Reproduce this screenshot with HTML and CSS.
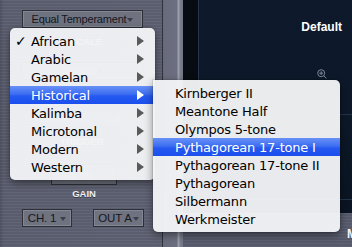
FILE: index.html
```html
<!DOCTYPE html>
<html lang="en">
<head>
    <meta charset="UTF-8">
    <title>Scale menu</title>
    <link rel="stylesheet" href="styles.css">
</head>
<body>
    <div class="screen">
        <div class="left">
            <div class="sel wide">Equal Temperament<span class="caret"></span></div>
            <div class="lbl scale">SCALE</div>
            <div class="sel wide dim">Normal<span class="caret"></span></div>
            <div class="latch"><span>LATCH</span><span class="latchVal">1</span></div>
            <div class="lbl trig">TRIGGER</div>
            <div class="num">-6 db<span class="step">&#9650;&#9660;</span></div>
            <div class="lbl gain">GAIN</div>
            <div class="outs">
                <div class="sel ch">CH. 1<span class="caret"></span></div>
                <div class="sel out">OUT A<span class="caret"></span></div>
            </div>
        </div>
        <div class="divider"></div>
        <div class="right">
            <div class="display">
                <div class="gutter"></div>
                <div class="plot">
                    <div class="band top">
                        <div class="preset">Default</div>
                        <svg class="zoomIcon" width="10" height="10" viewBox="0 0 10 10">
                            <circle cx="4.2" cy="4.2" r="3.5" fill="none" stroke="#7d8799" stroke-width="1"/>
                            <path d="M4.2 2.3v3.8M2.3 4.2h3.8M6.8 6.8l2.6 2.6" stroke="#7d8799" stroke-width="1" fill="none"/>
                        </svg>
                    </div>
                    <div class="band middle"></div>
                    <div class="band low"></div>
                </div>
            </div>
            <div class="bottom"><span class="bottomLbl">M</span></div>
        </div>

        <div class="menu main">
            <div class="row"><span class="mark">&#10003;</span><span class="txt">African</span><span class="arrow"></span></div>
            <div class="row"><span class="mark"></span><span class="txt">Arabic</span><span class="arrow"></span></div>
            <div class="row"><span class="mark"></span><span class="txt">Gamelan</span><span class="arrow"></span></div>
            <div class="row on"><span class="mark"></span><span class="txt">Historical</span><span class="arrow"></span></div>
            <div class="row"><span class="mark"></span><span class="txt">Kalimba</span><span class="arrow"></span></div>
            <div class="row"><span class="mark"></span><span class="txt">Microtonal</span><span class="arrow"></span></div>
            <div class="row"><span class="mark"></span><span class="txt">Modern</span><span class="arrow"></span></div>
            <div class="row"><span class="mark"></span><span class="txt">Western</span><span class="arrow"></span></div>
        </div>

        <div class="menu sub">
            <div class="row"><span class="txt">Kirnberger II</span></div>
            <div class="row"><span class="txt">Meantone Half</span></div>
            <div class="row"><span class="txt">Olympos 5-tone</span></div>
            <div class="row on"><span class="txt">Pythagorean 17-tone I</span></div>
            <div class="row"><span class="txt">Pythagorean 17-tone II</span></div>
            <div class="row"><span class="txt">Pythagorean</span></div>
            <div class="row"><span class="txt">Silbermann</span></div>
            <div class="row"><span class="txt">Werkmeister</span></div>
        </div>
    </div>
</body>
</html>
```

FILE: styles.css
```css
body {
    margin: 0;
    width: 352px;
    height: 247px;
    overflow: hidden;
    font-family: "Liberation Sans", Arial, sans-serif;
}
.screen {
    position: relative;
    display: flex;
    width: 352px;
    height: 247px;
}
.left {
    width: 162px;
    height: 247px;
    box-sizing: border-box;
    padding-top: 10px;
    display: flex;
    flex-direction: column;
    background:
        repeating-linear-gradient(to bottom, rgba(255,255,255,0.04) 0 1px, rgba(0,0,0,0.03) 1px 3px),
        linear-gradient(to right, #4e5160 0, #5c5f70 4px, #5e6172 100%);
}
.sel {
    position: relative;
    box-sizing: border-box;
    height: 18px;
    display: flex;
    align-items: center;
    justify-content: center;
    background: #6f737f;
    border: 1px solid #2e3038;
    box-shadow: inset 0 0 0 1px #838795;
    color: #14161f;
    font-size: 11px;
    letter-spacing: -0.2px;
}
.wide {
    margin-left: 22px;
    width: 121px;
}
.dim {
    margin-top: 15px;
    color: #a2a6b3;
}
.caret {
    width: 0;
    height: 0;
    margin-left: 1px;
    margin-top: 2px;
    border-top: 4px solid #3b3e4a;
    border-left: 3px solid transparent;
    border-right: 3px solid transparent;
}
.lbl {
    color: #eef0f4;
    font-weight: bold;
    font-size: 9.5px;
    line-height: 10px;
    height: 10px;
    text-align: center;
    width: 162px;
    text-shadow: 0 1px 0 rgba(0,0,0,0.4);
}
.scale {
    margin-top: 9px;
    padding-left: 10px;
    box-sizing: border-box;
}
.latch {
    margin: 33px 0 0 33px;
    width: 95px;
    height: 12px;
    display: flex;
    justify-content: space-between;
    align-items: center;
    color: #a8acb8;
    font-size: 9px;
    padding: 0 8px;
    box-sizing: border-box;
    background: #6a6e7a;
}
.trig {
    margin-top: 12px;
    padding-left: 2px;
    box-sizing: border-box;
}
.num {
    margin: 17px 0 0 51px;
    width: 66px;
    height: 21px;
    box-sizing: border-box;
    border: 1px solid #2e3038;
    background: #6c707c;
    color: #a8acb8;
    font-size: 11px;
    display: flex;
    align-items: center;
    justify-content: space-between;
    padding: 0 4px 0 15px;
}
.step {
    font-size: 5px;
    line-height: 5px;
    width: 6px;
    color: #8e92a0;
}
.gain {
    margin-top: 4px;
    padding-left: 6px;
    box-sizing: border-box;
}
.outs {
    margin: 10px 0 0 22px;
    display: flex;
    gap: 21px;
}
.ch {
    width: 50px;
    height: 18px;
    font-size: 11.5px;
}
.out {
    width: 51px;
    height: 18px;
    font-size: 11.5px;
}
.ch .caret, .out .caret {
    margin-left: 4px;
    border-top-color: #3b3e4a;
}
.out .caret {
    margin-left: 1px;
}
.divider {
    width: 21px;
    height: 247px;
    box-sizing: border-box;
    border-left: 1px solid #30323d;
    background: linear-gradient(to right, #686b7b 0, #6c6f7f 14px, #9a9dac 15px, #9a9dac 16px, #7b7e8c 17px, #6f7280 21px);
}
.right {
    flex: 1;
    display: flex;
    flex-direction: column;
}
.display {
    height: 213px;
    display: flex;
}
.gutter {
    width: 15px;
    background: #070b12;
    border-right: 1px solid #26354b;
}
.plot {
    flex: 1;
    display: flex;
    flex-direction: column;
    background: linear-gradient(to bottom, #0e1a2c, #0c1828 60%, #0a1422);
}
.band {
    box-sizing: border-box;
    border-bottom: 1px solid #24344a;
}
.top {
    height: 115px;
    display: flex;
    flex-direction: column;
    align-items: flex-end;
    padding: 21px 10px 0 0;
}
.preset {
    color: #ffffff;
    font-weight: bold;
    font-size: 12px;
    line-height: 12px;
}
.zoomIcon {
    display: block;
    margin: 36px 15px 0 0;
}
.middle {
    height: 85px;
}
.low {
    flex: 1;
    border-bottom: none;
}
.bottom {
    flex: 1;
    display: flex;
    justify-content: flex-end;
    align-items: flex-end;
    padding: 0 0 6px 0;
    background:
        repeating-linear-gradient(to bottom, rgba(255,255,255,0.04) 0 1px, rgba(0,0,0,0.03) 1px 3px),
        #585c6d;
}
.bottomLbl {
    color: #f2f3f6;
    font-weight: bold;
    font-size: 12px;
    margin-right: -5px;
}
.menu {
    position: absolute;
    box-sizing: border-box;
    padding: 4px 0;
    background: rgba(243, 244, 246, 0.96);
    box-shadow: 0 3px 9px rgba(0, 0, 0, 0.45), 0 0 0 1px rgba(0, 0, 0, 0.08);
    font-family: "DejaVu Sans", sans-serif;
    font-size: 13px;
    letter-spacing: -0.2px;
    color: #000;
}
.main {
    left: 10px;
    top: 28px;
    width: 145px;
    border-radius: 5px;
}
.sub {
    left: 153px;
    top: 80px;
    width: 187px;
    border-radius: 0 5px 5px 5px;
}
.row {
    height: 18px;
    display: flex;
    align-items: center;
    padding-right: 11px;
}
.sub .row {
    padding-left: 22px;
}
.mark {
    width: 21px;
    box-sizing: border-box;
    padding-left: 5px;
    font-size: 14px;
}
.txt {
    flex: 1;
    white-space: nowrap;
}
.arrow {
    width: 0;
    height: 0;
    border-left: 7px solid #5a5a5a;
    border-top: 5px solid transparent;
    border-bottom: 5px solid transparent;
}
.row.on {
    color: #fff;
    background: linear-gradient(to bottom, #6890f5 0%, #3d6ef2 45%, #2659ef 55%, #1b4fee 100%);
}
.row.on .arrow {
    border-left-color: #fff;
}
```
